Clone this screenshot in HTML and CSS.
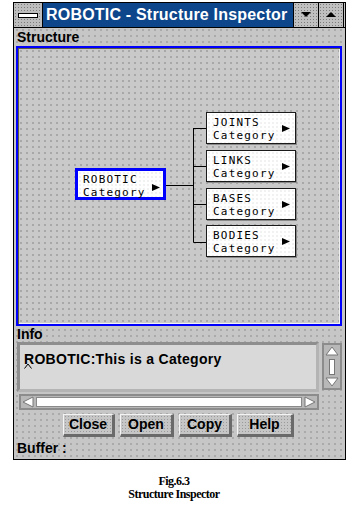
FILE: index.html
```html
<!DOCTYPE html>
<html>
<head>
<meta charset="utf-8">
<link rel="stylesheet" href="styles.css">
</head>
<body>
<div class="page">
  <div class="window">
    <div class="titlebar">
      <div class="sysbox"><span class="sysbar"></span></div>
      <div class="title">ROBOTIC - Structure Inspector</div>
      <div class="tbtn"><svg width="10" height="6" viewBox="0 0 10 6"><polygon points="0,0 10,0 5,5" fill="#000"/></svg></div>
      <div class="tbtn last"><svg width="10" height="6" viewBox="0 0 10 6"><polygon points="0,5 10,5 5,0" fill="#000"/></svg></div>
    </div>
    <div class="label">Structure</div>
    <div class="canvas">
      <svg class="links" width="322" height="276" viewBox="0 0 322 276">
        <path d="M148 137.5H175.5M175.5 80V194.5M175.5 80.5H188M175.5 118.5H188M175.5 156.5H188M175.5 194.5H188" stroke="#000" stroke-width="1" fill="none"/>
      </svg>
      <div class="node root">
        <div class="ntext">ROBOTIC</div>
        <div class="ntext">Category</div>
        <svg class="arrow" width="8" height="7" viewBox="0 0 8 7"><polygon points="0,0 8,3.5 0,7" fill="#000"/></svg>
      </div>
      <div class="node child n1">
        <div class="ntext">JOINTS</div>
        <div class="ntext">Category</div>
        <svg class="arrow" width="8" height="7" viewBox="0 0 8 7"><polygon points="0,0 8,3.5 0,7" fill="#000"/></svg>
      </div>
      <div class="node child n2">
        <div class="ntext">LINKS</div>
        <div class="ntext">Category</div>
        <svg class="arrow" width="8" height="7" viewBox="0 0 8 7"><polygon points="0,0 8,3.5 0,7" fill="#000"/></svg>
      </div>
      <div class="node child n3">
        <div class="ntext">BASES</div>
        <div class="ntext">Category</div>
        <svg class="arrow" width="8" height="7" viewBox="0 0 8 7"><polygon points="0,0 8,3.5 0,7" fill="#000"/></svg>
      </div>
      <div class="node child n4">
        <div class="ntext">BODIES</div>
        <div class="ntext">Category</div>
        <svg class="arrow" width="8" height="7" viewBox="0 0 8 7"><polygon points="0,0 8,3.5 0,7" fill="#000"/></svg>
      </div>
    </div>
    <div class="label info">Info</div>
    <div class="inforow">
      <div class="textbox">
        <span class="itext">ROBOTIC:This is a Category</span>
        <svg class="caret" width="8" height="6" viewBox="0 0 8 6"><path d="M0.5 5.5L4 1L7.5 5.5" stroke="#000" fill="none"/></svg>
      </div>
      <div class="vscroll">
        <svg width="14" height="10" viewBox="0 0 14 10"><polygon points="7,1 13,9 1,9" fill="#fff" stroke="#777"/></svg>
        <span class="vthumb"></span>
        <svg width="14" height="10" viewBox="0 0 14 10"><polygon points="1,1 13,1 7,9" fill="#fff" stroke="#777"/></svg>
      </div>
    </div>
    <div class="hscroll">
      <svg width="12" height="12" viewBox="0 0 12 12"><polygon points="1,6 11,1 11,11" fill="#fff" stroke="#777"/></svg>
      <span class="htrough"></span>
      <svg width="12" height="12" viewBox="0 0 12 12"><polygon points="11,6 1,1 1,11" fill="#fff" stroke="#777"/></svg>
    </div>
    <div class="buttons">
      <div class="btn w52">Close</div>
      <div class="btn w54">Open</div>
      <div class="btn w53">Copy</div>
      <div class="btn w57">Help</div>
    </div>
    <div class="label buffer">Buffer :</div>
  </div>
  <div class="figcap">Fig.6.3<br>Structure Inspector</div>
</div>
</body>
</html>
```

FILE: styles.css
```css
html, body {
  margin: 0;
  background: #fff;
}
body {
  font-family: "Liberation Sans", Arial, sans-serif;
}
.page {
  width: 359px;
  height: 516px;
  padding-top: 2px;
  box-sizing: border-box;
  overflow: hidden;
}
.window {
  margin-left: 13px;
  width: 333px;
  height: 458px;
  box-sizing: border-box;
  border: 1px solid #000;
  background-color: #c6c6c6;
  background-image: radial-gradient(circle, #9a9a9a 0.6px, transparent 0.9px);
  background-size: 6px 6px;
  display: flex;
  flex-direction: column;
}
.titlebar {
  height: 24px;
  border-bottom: 1px solid #000;
  display: flex;
  flex-shrink: 0;
}
.sysbox {
  width: 28px;
  border-right: 1px solid #000;
  background-color: #bdbdbd;
  background-image: radial-gradient(circle, #7c7c7c 0.6px, transparent 0.8px);
  background-size: 3px 3px;
  display: flex;
  align-items: center;
  justify-content: center;
}
.sysbar {
  display: block;
  width: 18px;
  height: 3px;
  border: 1px solid #000;
  background: #fff;
}
.title {
  flex: 1;
  background: #0d468b;
  color: #fff;
  font-weight: bold;
  font-size: 16px;
  letter-spacing: 0.2px;
  line-height: 24px;
  padding-left: 3px;
  white-space: nowrap;
  overflow: hidden;
}
.tbtn {
  width: 24px;
  border-left: 1px solid #000;
  background-color: #c0c0c0;
  background-image: radial-gradient(circle, #7c7c7c 0.6px, transparent 0.8px);
  background-size: 3px 3px;
  display: flex;
  align-items: center;
  justify-content: center;
}
.tbtn.last {
  border-right: 1px solid #000;
  margin-right: 1px;
}
.label {
  height: 18px;
  line-height: 18px;
  font-weight: bold;
  font-size: 14px;
  padding-left: 3px;
  color: #000;
  flex-shrink: 0;
}
.label.info {
  height: 16px;
  line-height: 16px;
}
.label.buffer {
  height: 19px;
  line-height: 18px;
}
.canvas {
  position: relative;
  margin: 0 3px 0 2px;
  height: 280px;
  box-sizing: border-box;
  border: 2px solid #0000ff;
  background-color: #c9c9c9;
  background-image: radial-gradient(circle, #959595 0.6px, transparent 0.9px);
  background-size: 6px 6px;
  box-shadow: inset 1px 1px 0 #5c5c44, inset -1px -1px 0 #f0f0f0;
  flex-shrink: 0;
}
.links {
  position: absolute;
  left: 0;
  top: 0;
}
.node {
  position: absolute;
  box-sizing: border-box;
  background-color: #fff;
  background-image: radial-gradient(circle, #d4d4d4 0.5px, transparent 0.8px);
  background-size: 4px 4px;
  font-family: "DejaVu Sans Mono", "Liberation Mono", monospace;
  font-size: 11px;
  letter-spacing: 1.2px;
  line-height: 13px;
  color: #000;
}
.node .ntext {
  white-space: nowrap;
}
.node .arrow {
  position: absolute;
  top: 13px;
}
.root {
  left: 57px;
  top: 120px;
  width: 91px;
  height: 32px;
  border: 3px solid #0000ff;
  padding: 2px 0 0 5px;
}
.root .arrow {
  left: 74px;
}
.child {
  left: 188px;
  width: 90px;
  height: 32px;
  border: 1px solid #1a1a1a;
  box-shadow: 1px 1px 0 #8a8a8a;
  padding: 3px 0 0 6px;
}
.child .arrow {
  left: 75px;
  top: 12px;
}
.n1 { top: 64px; }
.n2 { top: 102px; }
.n3 { top: 140px; }
.n4 { top: 177px; }
.inforow {
  height: 50px;
  display: flex;
  align-items: flex-start;
  flex-shrink: 0;
}
.textbox {
  position: relative;
  margin-left: 3px;
  width: 302px;
  height: 50px;
  box-sizing: border-box;
  border: 3px solid #8e8e8e;
  border-right-color: #b4b4b4;
  border-bottom-color: #b4b4b4;
  background-color: #ececec;
  background-image: radial-gradient(circle, #c2c2c2 0.6px, transparent 0.8px);
  background-size: 2px 2px;
  padding: 5px 0 0 4px;
}
.itext {
  font-weight: bold;
  font-size: 14px;
  letter-spacing: 0.3px;
  line-height: 16px;
  color: #000;
}
.caret {
  position: absolute;
  left: 4px;
  top: 18px;
}
.vscroll {
  margin-left: 3px;
  margin-top: 1px;
  width: 20px;
  height: 47px;
  box-sizing: border-box;
  border: 2px solid #8c8c8c;
  background: #b8b8b8;
  display: flex;
  flex-direction: column;
  align-items: center;
  justify-content: space-between;
  padding: 1px 0;
}
.vthumb {
  display: block;
  width: 4px;
  height: 14px;
  background: #fff;
  border: 1px solid #777;
}
.hscroll {
  margin: 2px 0 0 5px;
  width: 300px;
  height: 16px;
  box-sizing: border-box;
  border: 2px solid #8c8c8c;
  background: #b8b8b8;
  display: flex;
  align-items: center;
  gap: 2px;
  padding: 0 1px;
  flex-shrink: 0;
}
.htrough {
  flex: 1;
  height: 8px;
  background: #fff;
  border: 1px solid #8a8a8a;
}
.buttons {
  height: 27px;
  margin-top: 2px;
  display: flex;
  align-items: center;
  gap: 5px;
  padding-left: 49px;
  flex-shrink: 0;
}
.btn {
  height: 23px;
  box-sizing: border-box;
  border-top: 1px solid #f4f4f4;
  border-left: 1px solid #f4f4f4;
  border-right: 3px solid #6a6a6a;
  border-bottom: 3px solid #6a6a6a;
  background-color: #c6c6c6;
  background-image: radial-gradient(circle, #9a9a9a 0.6px, transparent 0.8px);
  background-size: 3px 3px;
  font-weight: bold;
  font-size: 14px;
  line-height: 19px;
  text-align: center;
  color: #000;
}
.w52 { width: 52px; }
.w54 { width: 54px; }
.w53 { width: 53px; }
.w57 { width: 57px; }
.figcap {
  width: 348px;
  margin-top: 15px;
  text-align: center;
  font-family: "Liberation Serif", "Times New Roman", serif;
  font-weight: bold;
  font-size: 12px;
  line-height: 13px;
  letter-spacing: -0.5px;
  color: #000;
}
```
